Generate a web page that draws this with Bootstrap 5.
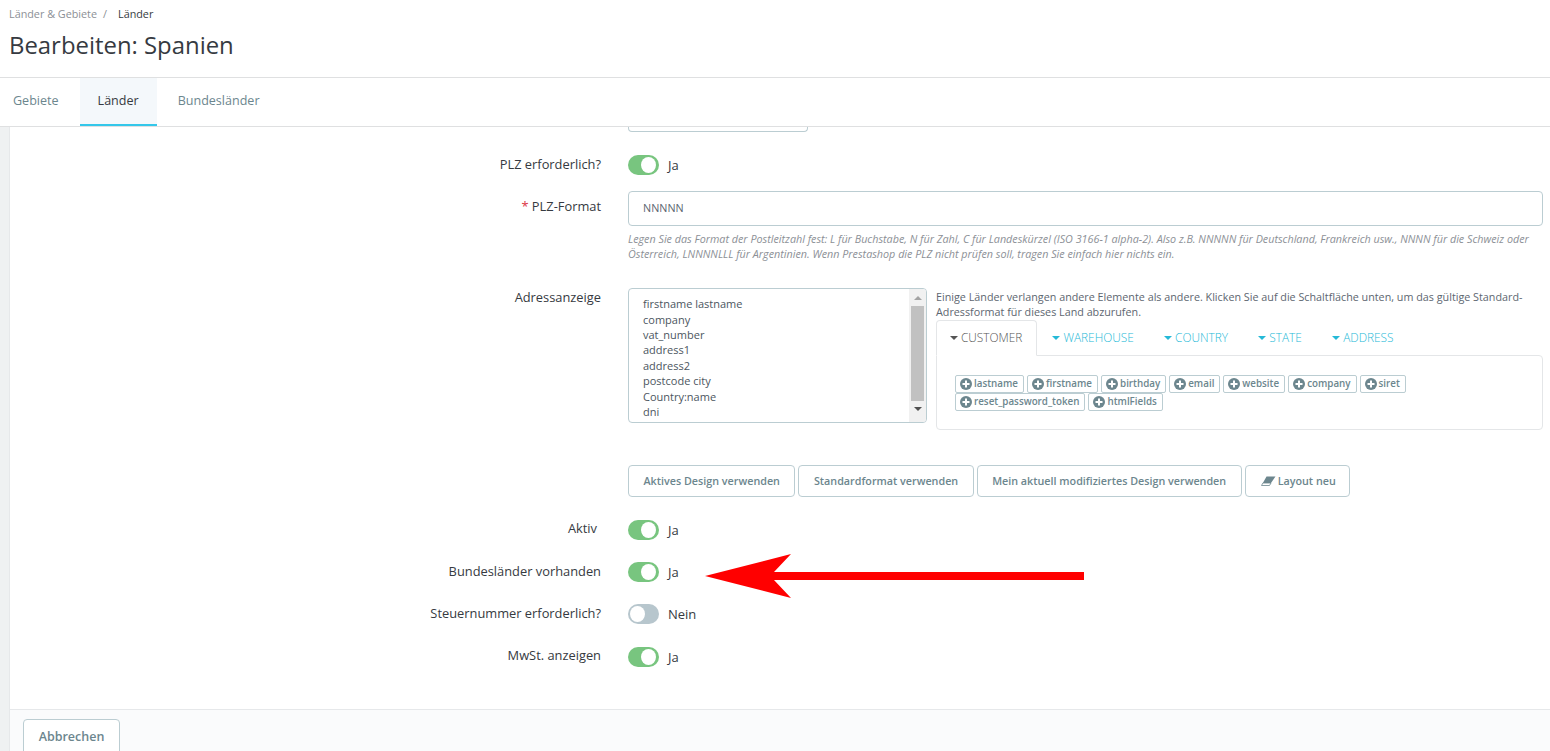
<!DOCTYPE html>
<html lang="de"><head><meta charset="utf-8"><title>Bearbeiten: Spanien</title>
<link href="https://cdn.jsdelivr.net/npm/bootstrap@5.3.0/dist/css/bootstrap.min.css" rel="stylesheet">
<style>
html,body{height:751px;overflow:hidden}
body{font-family:"Open Sans",sans-serif;font-size:12.85px;color:#363a41;background:#fff}
.hdr{height:78px;border-bottom:1px solid #dfe0e1;padding:7px 9px 0}
.crumbs{font-size:10.8px;line-height:14px;color:#8c9096;display:flex;gap:6px}
.crumbs b{font-weight:400;color:#363a41;margin-left:5px}
.ttl{font-size:23.9px;line-height:32px;margin:8px 0 0;font-weight:400;color:#363a41}
.tabsbar{height:49px;border-bottom:1px solid #dfe0e1;display:flex}
.tabsbar a{display:block;padding:14px 18px 0;height:48px;color:#6c868e;text-decoration:none;font-size:12.55px;line-height:18px}
.tabsbar a:first-child{padding:14px 21px 0 13px}
.tabsbar a:last-child{padding-left:21px}
.tabsbar a.on{background:#f4f8fb;color:#363a41;border-bottom:2px solid #34c7ea}
.shell{display:flex;height:625px;overflow:hidden}
.strip{width:10px;background:#eff1f2;border-right:1px solid #e6e8ea;flex:none}
.main{flex:1;display:flex;flex-direction:column;min-width:0}
.frm{flex:1;min-height:0;overflow:hidden}
.lin{display:flex;column-gap:27px;padding-right:7px}
.lbl{width:591px;flex:none;text-align:right;line-height:18px;color:#363a41}
.ctl{flex:1;min-width:0}
.stub{height:5px;width:180px;border:1px solid #bbcdd2;border-top:0;border-radius:0 0 4px 4px}
.sw{display:flex;align-items:center;gap:9px;height:20px;line-height:18px;font-size:13px}
.sw span:last-child{margin-top:-1px}
.knob{width:31px;height:20px;border-radius:10px;background:#78c57f;position:relative;display:block}
.knob::after{content:"";position:absolute;top:2px;right:3px;width:15px;height:16px;border-radius:50%;background:#fff}
.knob.off{background:#b7c6cd}
.knob.off::after{right:auto;left:2px}
.fld{height:35px;border:1px solid #bbcdd2;border-radius:4px;padding:0 14px;font-size:10.8px;line-height:32px;color:#5b6670}
.tip{font-size:10.77px;line-height:15px;font-style:italic;color:#8c9096;margin-top:5px}
.adr{display:flex;gap:9px}
.lstb{width:299px;height:135px;flex:none;border:1px solid #bbcdd2;border-radius:4px;display:flex;overflow:hidden}
.lstt{flex:1;padding:7.2px 14px 0;font-size:11px;line-height:15.4px;color:#4c5660}
.sbar{width:17px;background:#f1f1f1;display:flex;flex-direction:column;align-items:center}
.sbar i{display:block;width:0;height:0;border:4px solid transparent}
.sbar i.u{border-bottom:4px solid #a3a3a3;border-top:0;margin-top:7px}
.sbar i.d{border-top:4px solid #505050;border-bottom:0;margin-top:6px}
.sbar em{display:block;width:13px;height:95px;background:#c1c1c1;margin-top:6px}
.adrr{flex:1;min-width:0;padding-top:1px}
.note{font-size:10.77px;line-height:15px;color:#5d6670}
.kt{display:flex;height:36px;margin-top:1px;position:relative;z-index:1}
.kt a{display:flex;align-items:center;gap:3px;padding:0 14px;font-size:11.85px;color:#25b9d7;font-weight:300;text-decoration:none;margin-right:2.3px}
.kt a::before{content:"";border:4px solid transparent;border-top:4px solid currentColor;border-bottom:0}
.kt a.on{color:#555;border:1px solid #e4e6e8;border-bottom:1px solid #fff;border-radius:4px 4px 0 0;background:#fff;padding:0 14px 0 13px;height:36px;margin-right:1px}
.kb{border:1px solid #e4e6e8;border-radius:0 4px 4px 4px;height:75px;margin-top:-1px;padding:19px 100px 0 18px;display:flex;flex-wrap:wrap;align-content:flex-start;column-gap:3px;row-gap:0}
.tk{display:inline-flex;align-items:center;gap:2px;height:18px;border:1px solid #bbcdd2;border-radius:2px;padding:0 5px 1px 4px;font-size:9.8px;font-weight:600;color:#6c868e;line-height:15px;white-space:nowrap;background:#fff}
.plus{width:12px;height:12px;flex:none}
.bts{display:flex;gap:3px}
.bt{height:32px;border:1px solid #bbcdd2;border-radius:4px;background:#fff;color:#6c868e;font-size:10.76px;font-weight:600;padding:0 14.5px;line-height:30px;display:inline-flex;align-items:center;gap:2px}
.ftr{height:43px;background:#fafbfc;border-top:1px solid #e6e8ea;padding:9px 13px 0;flex:none}
.cancel{height:36px;width:97px;border:1px solid #bbcdd2;border-radius:4px;background:#fff;color:#6c868e;font-size:12.5px;font-weight:600;padding:0}
.arrow{position:absolute;left:704px;top:553px;width:381px;height:46px}
</style></head><body>
<div class="hdr">
 <div class="crumbs"><span>Länder &amp; Gebiete</span><span>/</span><b>Länder</b></div>
 <h1 class="ttl">Bearbeiten: Spanien</h1>
</div>
<nav class="tabsbar"><a href="#">Gebiete</a><a href="#" class="on">Länder</a><a href="#">Bundesländer</a></nav>
<div class="shell">
 <div class="strip"></div>
 <div class="main">
  <div class="frm">
   <div class="lin"><div class="lbl"></div><div class="ctl"><div class="stub"></div></div></div>
   <div class="lin" style="margin-top:23px"><div class="lbl">PLZ erforderlich?</div><div class="ctl"><div class="sw"><span class="knob"></span><span>Ja</span></div></div></div>
   <div class="lin" style="margin-top:16px"><div class="lbl" style="padding-top:6px"><span class="text-danger">*</span> PLZ-Format</div><div class="ctl"><div class="fld">NNNNN</div>
    <div class="tip">Legen Sie das Format der Postleitzahl fest: L für Buchstabe, N für Zahl, C für Landeskürzel (ISO 3166-1 alpha-2). Also z.B. NNNNN für Deutschland, Frankreich usw., NNNN für die Schweiz oder Österreich, LNNNNLLL für Argentinien. Wenn Prestashop die PLZ nicht prüfen soll, tragen Sie einfach hier nichts ein.</div></div></div>
   <div class="lin" style="margin-top:27px"><div class="lbl">Adressanzeige</div><div class="ctl">
    <div class="adr">
     <div class="lstb"><div class="lstt">firstname lastname<br>company<br>vat_number<br>address1<br>address2<br>postcode city<br>Country:name<br>dni</div><div class="sbar"><i class="u"></i><em></em><i class="d"></i></div></div>
     <div class="adrr">
      <div class="note">Einige Länder verlangen andere Elemente als andere. Klicken Sie auf die Schaltfläche unten, um das gültige Standard-Adressformat für dieses Land abzurufen.</div>
      <div class="kt"><a href="#" class="on">CUSTOMER</a><a href="#">WAREHOUSE</a><a href="#">COUNTRY</a><a href="#">STATE</a><a href="#">ADDRESS</a></div>
      <div class="kb">
       <span class="tk"><svg class="plus" viewBox="0 0 12 12"><circle cx="6" cy="6" r="6" fill="#6c868e"/><path d="M5 2.5h2V5h2.5v2H7v2.5H5V7H2.5V5H5z" fill="#fff"/></svg>lastname</span>
       <span class="tk"><svg class="plus" viewBox="0 0 12 12"><circle cx="6" cy="6" r="6" fill="#6c868e"/><path d="M5 2.5h2V5h2.5v2H7v2.5H5V7H2.5V5H5z" fill="#fff"/></svg>firstname</span>
       <span class="tk"><svg class="plus" viewBox="0 0 12 12"><circle cx="6" cy="6" r="6" fill="#6c868e"/><path d="M5 2.5h2V5h2.5v2H7v2.5H5V7H2.5V5H5z" fill="#fff"/></svg>birthday</span>
       <span class="tk"><svg class="plus" viewBox="0 0 12 12"><circle cx="6" cy="6" r="6" fill="#6c868e"/><path d="M5 2.5h2V5h2.5v2H7v2.5H5V7H2.5V5H5z" fill="#fff"/></svg>email</span>
       <span class="tk"><svg class="plus" viewBox="0 0 12 12"><circle cx="6" cy="6" r="6" fill="#6c868e"/><path d="M5 2.5h2V5h2.5v2H7v2.5H5V7H2.5V5H5z" fill="#fff"/></svg>website</span>
       <span class="tk"><svg class="plus" viewBox="0 0 12 12"><circle cx="6" cy="6" r="6" fill="#6c868e"/><path d="M5 2.5h2V5h2.5v2H7v2.5H5V7H2.5V5H5z" fill="#fff"/></svg>company</span>
       <span class="tk"><svg class="plus" viewBox="0 0 12 12"><circle cx="6" cy="6" r="6" fill="#6c868e"/><path d="M5 2.5h2V5h2.5v2H7v2.5H5V7H2.5V5H5z" fill="#fff"/></svg>siret</span>
       <span class="tk"><svg class="plus" viewBox="0 0 12 12"><circle cx="6" cy="6" r="6" fill="#6c868e"/><path d="M5 2.5h2V5h2.5v2H7v2.5H5V7H2.5V5H5z" fill="#fff"/></svg>reset_password_token</span>
       <span class="tk"><svg class="plus" viewBox="0 0 12 12"><circle cx="6" cy="6" r="6" fill="#6c868e"/><path d="M5 2.5h2V5h2.5v2H7v2.5H5V7H2.5V5H5z" fill="#fff"/></svg>htmlFields</span>
      </div>
     </div>
    </div>
   </div></div>
   <div class="lin" style="margin-top:35px"><div class="lbl"></div><div class="ctl"><div class="bts">
    <button class="bt">Aktives Design verwenden</button><button class="bt">Standardformat verwenden</button><button class="bt">Mein aktuell modifiziertes Design verwenden</button><button class="bt" style="padding-left:15px;padding-right:13px"><svg width="15" height="10" viewBox="0 0 15 10"><path d="M5.5 .5H14.5L10 7H1.9z" fill="#6c868e"/><path d="M1.9 7H10L8.5 9.5H.5z" fill="#fff" stroke="#6c868e" stroke-width=".8"/></svg>Layout neu</button>
   </div></div></div>
   <div class="lin" style="margin-top:23px"><div class="lbl" style="padding-right:4px;margin-top:-1px">Aktiv</div><div class="ctl"><div class="sw"><span class="knob"></span><span>Ja</span></div></div></div>
   <div class="lin" style="margin-top:22px"><div class="lbl">Bundesländer vorhanden</div><div class="ctl"><div class="sw"><span class="knob"></span><span>Ja</span></div></div></div>
   <div class="lin" style="margin-top:22px"><div class="lbl">Steuernummer erforderlich?</div><div class="ctl"><div class="sw"><span class="knob off"></span><span>Nein</span></div></div></div>
   <div class="lin" style="margin-top:23px"><div class="lbl" style="margin-top:-1px">MwSt. anzeigen</div><div class="ctl"><div class="sw"><span class="knob"></span><span>Ja</span></div></div></div>
  </div>
  <div class="ftr"><button class="cancel">Abbrechen</button></div>
 </div>
</div>
<svg class="arrow" viewBox="0 0 381 46"><path d="M1 23 L87 1 L70 19 H380 V27 H70 L87 45 Z" fill="#f00"/></svg>
</body></html>
